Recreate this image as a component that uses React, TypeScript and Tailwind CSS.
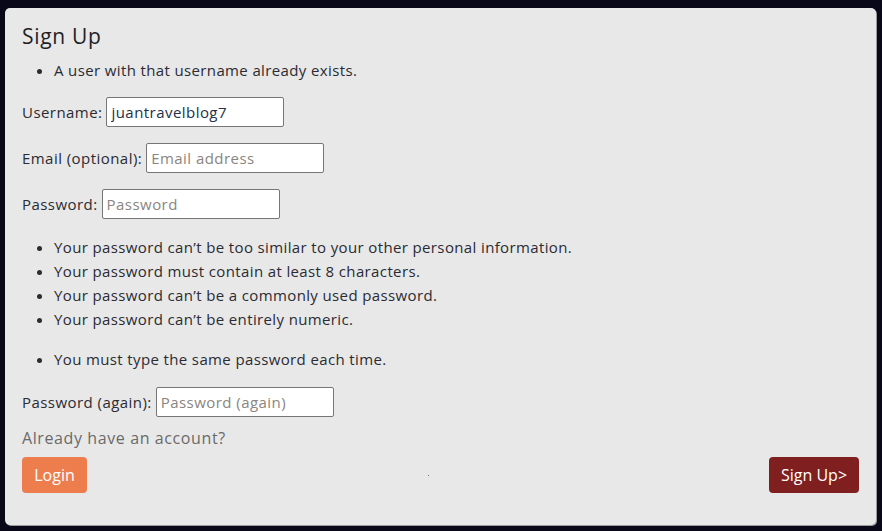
import React from "react";

const font = { fontFamily: "'Open Sans', Lato, sans-serif" };

function Field({ label, placeholder, value }: { label: string; placeholder: string; value?: string }) {
  return (
    <div className="flex items-center h-[30px] text-[15px] tracking-[0.45px] text-[#2b2b33]">
      <label className="mr-[4px]">{label}</label>
      <input
        className="w-[178px] h-[30px] bg-white border border-[#767676] rounded-[2px] px-[4px] text-[15px] tracking-[0.45px] text-[#24304a] placeholder:text-[#8a8580] outline-none"
        placeholder={placeholder}
        defaultValue={value}
        style={font}
      />
    </div>
  );
}

export default function App() {
  return (
    <div className="w-[882px] h-[531px] bg-[#080818] pt-[8px] pl-[5px]" style={font}>
      <div className="w-[871px] h-[517px] bg-[#e8e8e8] rounded-[5px] px-[17px] pt-[16px] shadow-[1px_1px_0_#9a9a9a] flex flex-col">
        <h1 className="text-[21px] leading-[25px] tracking-[0.7px] text-[#1f1f26]">Sign Up</h1>
        <ul className="list-disc pl-[32px] mt-[9px] text-[15px] leading-[24px] tracking-[0.37px] text-[#2b2b33]">
          <li>A user with that username already exists.</li>
        </ul>
        <div className="mt-[15px]">
          <Field label="Username:" placeholder="Username" value="juantravelblog7" />
        </div>
        <div className="mt-[16px]">
          <Field label="Email (optional):" placeholder="Email address" />
        </div>
        <div className="mt-[16px]">
          <Field label="Password:" placeholder="Password" />
        </div>
        <ul className="list-disc pl-[32px] mt-[16px] text-[15px] leading-[24px] tracking-[0.37px] text-[#2b2b33]">
          <li>Your password can’t be too similar to your other personal information.</li>
          <li>Your password must contain at least 8 characters.</li>
          <li>Your password can’t be a commonly used password.</li>
          <li>Your password can’t be entirely numeric.</li>
        </ul>
        <ul className="list-disc pl-[32px] mt-[16px] text-[15px] leading-[24px] tracking-[0.37px] text-[#2b2b33]">
          <li>You must type the same password each time.</li>
        </ul>
        <div className="mt-[16px]">
          <Field label="Password (again):" placeholder="Password (again)" />
        </div>
        <p className="mt-[9px] text-[16px] leading-[24px] tracking-[0.6px] text-[#6a6a6a]">
          Already have an account?
        </p>
        <div className="mt-[7px] flex items-center justify-between">
          <button className="h-[36px] w-[65px] rounded-[4px] bg-[#ee7d4e] text-white text-[16px]">Login</button>
          <span className="w-[1px] h-[1px] bg-[#8a6a5a]" />
          <button className="h-[36px] w-[90px] rounded-[4px] bg-[#801f20] text-white text-[16px]">Sign Up&gt;</button>
        </div>
      </div>
    </div>
  );
}
